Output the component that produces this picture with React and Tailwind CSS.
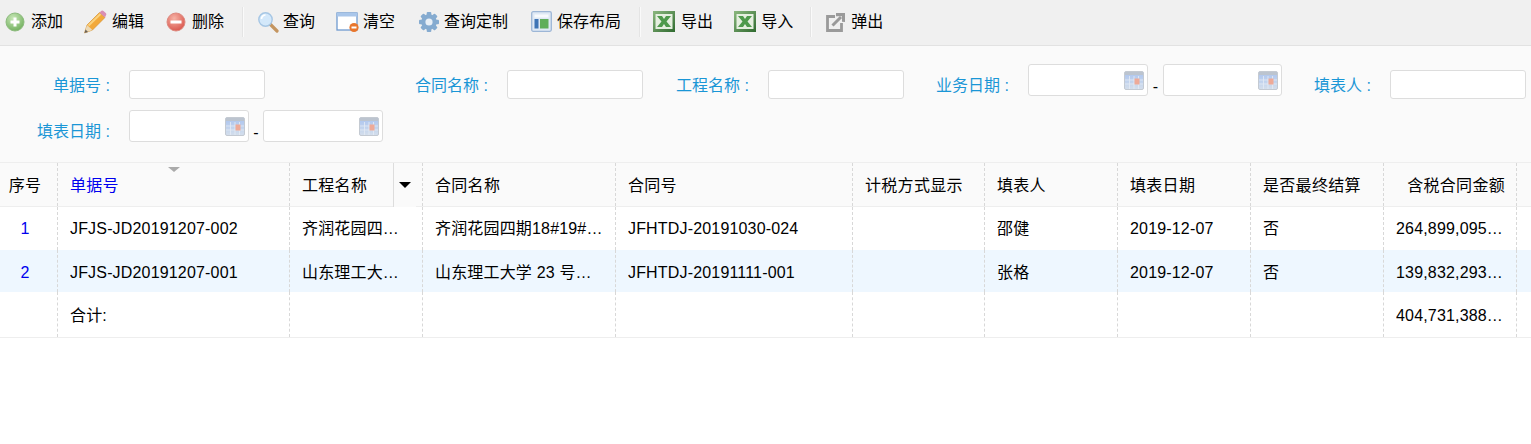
import React from "react";

const Add = () => (
  <svg width="20" height="20" viewBox="0 0 20 20" className="shrink-0"><defs><radialGradient id="g1" cx="40%" cy="30%" r="75%"><stop offset="0" stopColor="#c9e8b8"/><stop offset="1" stopColor="#6fae5c"/></radialGradient></defs><circle cx="10" cy="10" r="9" fill="url(#g1)" stroke="#8dbb7e"/><path d="M10 5.5v9M5.5 10h9" stroke="#fff" strokeWidth="3"/></svg>
);
const Pencil = () => (
  <svg width="24" height="24" viewBox="0 0 24 24" className="shrink-0"><path d="M1.5 23l2.5-8L16.5 2.5l5.5 5L9.5 20z" fill="#f2a93b" stroke="#d08a2a" strokeWidth=".6"/><path d="M5.5 15.5L17.5 4" stroke="#fbd27d" strokeWidth="2"/><path d="M16.5 2.5l2-1.8q1-.6 2 .2l2.5 2.3q.8 1 0 2L22 7.5z" fill="#d98fb4"/><path d="M1.5 23l2.5-8 5.5 5z" fill="#ecd9b5"/><path d="M1.5 23l1-3.4 2.6 2.3z" fill="#6b6257"/></svg>
);
const Del = () => (
  <svg width="20" height="20" viewBox="0 0 20 20" className="shrink-0"><defs><radialGradient id="g2" cx="40%" cy="30%" r="75%"><stop offset="0" stopColor="#f6b3a6"/><stop offset="1" stopColor="#d9534a"/></radialGradient></defs><circle cx="10" cy="10" r="9" fill="url(#g2)" stroke="#dd8a80"/><rect x="4.5" y="8.5" width="11" height="3" fill="#fff"/></svg>
);
const Search = () => (
  <svg width="22" height="22" viewBox="0 0 22 22" className="shrink-0"><path d="M13 13l7 7" stroke="#c49560" strokeWidth="3.2" strokeLinecap="round"/><circle cx="8.5" cy="8.5" r="6.7" fill="#d3e8fa" stroke="#a6c6e4" strokeWidth="1.4"/><path d="M4.5 8a4 4 0 0 1 4-4" stroke="#fff" strokeWidth="1.6" fill="none"/></svg>
);
const Clear = () => (
  <svg width="24" height="22" viewBox="0 0 24 22" className="shrink-0"><rect x="1" y="2" width="20" height="17" fill="#fff" stroke="#6f9ad0" strokeWidth="1.3"/><rect x="1" y="2" width="20" height="3.5" fill="#a9c6ea"/><circle cx="18" cy="16.5" r="4.6" fill="#e8762d"/><rect x="15.5" y="15.5" width="5" height="2" fill="#fff"/></svg>
);
const Gear = () => (
  <svg width="22" height="22" viewBox="0 0 22 22" className="shrink-0"><g fill="#85abd0"><circle cx="11" cy="11" r="7.8"/>{[0,45,90,135,180,225,270,315].map(a=><rect key={a} x="8.7" y="1" width="4.6" height="5" rx="1" transform={`rotate(${a} 11 11)`}/>)}</g><circle cx="11" cy="11" r="3.6" fill="#e8eff6"/></svg>
);
const Layout = () => (
  <svg width="21" height="21" viewBox="0 0 21 21" className="shrink-0"><rect x=".7" y=".7" width="19.6" height="19.6" rx="1.5" fill="#dfe9f5" stroke="#9db6d6" strokeWidth="1.3"/><rect x="3.5" y="3.5" width="14" height="3" fill="#f7fafd"/><rect x="3.5" y="8" width="4" height="9.5" fill="#3f74b5"/><rect x="9" y="8" width="8.5" height="9.5" fill="#5fae5a"/></svg>
);
const Excel = () => (
  <svg width="22" height="21" viewBox="0 0 22 21" className="shrink-0"><defs><linearGradient id="g3" x1="0" y1="0" x2="1" y2="1"><stop offset="0" stopColor="#8cb87f"/><stop offset="1" stopColor="#2f6a2f"/></linearGradient></defs><rect x="0" y="0" width="22" height="21" fill="url(#g3)"/><rect x="2.5" y="3" width="17" height="15" fill="#e6efe0"/><path d="M4 5h5l2 3 2-3h5l-4.5 5.5L18 16h-5l-2-3-2 3H4l4.5-5.5z" fill="#4f9a4c"/></svg>
);
const Popout = () => (
  <svg width="20" height="20" viewBox="0 0 20 20" className="shrink-0" fill="none"><path d="M9 4.5H1.5v14h14V11" stroke="#9a9a9a" strokeWidth="2.8"/><path d="M6.5 13.5L15 5" stroke="#9a9a9a" strokeWidth="3"/><path d="M10 1h9v9l-3-.2V4.2H10z" fill="#9a9a9a"/></svg>
);
const Cal = () => (
  <svg width="20" height="19" viewBox="0 0 20 19" className="absolute right-[3px] top-[6px]"><defs><linearGradient id="g4" x1="0" y1="0" x2="0" y2="1"><stop offset="0" stopColor="#a9c3ef"/><stop offset="1" stopColor="#d5dfec"/></linearGradient></defs><rect x=".5" y=".5" width="19" height="18" rx="1.5" fill="url(#g4)" stroke="#c4cad2"/><rect x="1" y="1" width="18" height="3" fill="#bcc4cf"/><path d="M5.5 5v13M10 5v13M14.5 5v13M1 9h18M1 13h18" stroke="#e4ebf4" strokeWidth=".8"/><rect x="10.5" y="7.5" width="5" height="6" fill="#eeaa98"/></svg>
);

const Tool = ({ icon, label, gap = "gap-[6px]", className = "" }) => (
  <div className={`flex items-center ${gap} ${className}`}>
    {icon}
    <span>{label}</span>
  </div>
);
const Sep = ({ className = "" }) => <div className={`h-[30px] w-[2px] bg-[#e4e4e4] border-r border-[#fafafa] ${className}`} />;

const Label = ({ children, className = "" }) => (
  <label className={`text-[#1a96d6] text-right shrink-0 mt-[11px] leading-[22px] ${className}`}>{children}</label>
);
const Input = ({ className = "" }) => (
  <div className={`w-[136px] h-[29px] mt-[6px] ml-[19px] bg-white border border-[#dddddd] rounded-[3px] shrink-0 ${className}`} />
);
const DateBox = ({ className = "" }) => (
  <div className={`relative h-[32px] bg-white border border-[#dddddd] rounded-[3px] shrink-0 ${className}`}><Cal /></div>
);
const Dash = ({ className = "" }) => <span className={`text-center mt-[12px] leading-[22px] ${className}`}>-</span>;

const cols = "grid grid-cols-[58px_232px_133px_193px_237px_132px_133px_133px_133px_133px_15px]";
const Cell = ({ children, className = "" }) => (
  <div className={`border-r border-dashed border-[#d8d8d8] px-3 flex items-center min-w-0 ${className}`}>
    <span className="block truncate w-full">{children}</span>
  </div>
);

const rows = [
  ["1", "JFJS-JD20191207-002", "齐润花园四期18#19#楼", "齐润花园四期18#19#楼工程合同", "JFHTDJ-20191030-024", "", "邵健", "2019-12-07", "否", "264,899,095.00000"],
  ["2", "JFJS-JD20191207-001", "山东理工大学 23 号楼", "山东理工大学 23 号楼工程合同", "JFHTDJ-20191111-001", "", "张格", "2019-12-07", "否", "139,832,293.00000"],
];

const Row = ({ r, className = "" }) => (
  <div className={`${cols} tracking-[0.17px] ${className}`}>
    <Cell className="!pl-0 !pr-[7px] text-center text-[#0000ee]">{r[0]}</Cell>
    {r.slice(1).map((t, i) => (
      <Cell key={i}>{t}</Cell>
    ))}
    <div />
  </div>
);

export default function App() {
  return (
    <div className="w-[1531px] h-[444px] overflow-hidden bg-white text-[16px] text-black font-['Liberation_Sans','Noto_Sans_CJK_SC',sans-serif]">
      <div className="h-[46px] bg-[#f0f0f0] border-b border-[#e2e2e2] flex items-center pl-[5px] pb-[2px]">
        <Tool icon={<Add />} label="添加" />
        <Tool icon={<Pencil />} label="编辑" gap="gap-[5px]" className="ml-[20px]" />
        <Tool icon={<Del />} label="删除" className="ml-[22px]" />
        <Sep className="ml-[18px]" />
        <Tool icon={<Search />} label="查询" gap="gap-[4px]" className="ml-[13px]" />
        <Tool icon={<Clear />} label="清空" gap="gap-[3px]" className="ml-[21px]" />
        <Tool icon={<Gear />} label="查询定制" gap="gap-[4px]" className="ml-[23px]" />
        <Tool icon={<Layout />} label="保存布局" gap="gap-[5px]" className="ml-[23px]" />
        <Sep className="ml-[18px]" />
        <Tool icon={<Excel />} label="导出" className="ml-[12px]" />
        <Tool icon={<Excel />} label="导入" gap="gap-[5px]" className="ml-[21px]" />
        <Sep className="ml-[17px]" />
        <Tool icon={<Popout />} label="弹出" gap="gap-[5px]" className="ml-[14px]" />
      </div>

      <div className="h-[117px] bg-[#fafafa] border-b border-[#eeeeee] pt-[18px]">
        <div className="flex items-start h-[32px] w-full">
          <Label className="w-[110px]">单据号 :</Label>
          <Input />
          <Label className="w-[223px]">合同名称 :</Label>
          <Input />
          <Label className="w-[106px]">工程名称 :</Label>
          <Input />
          <Label className="w-[105px]">业务日期 :</Label>
          <DateBox className="w-[120px] ml-[19px]" />
          <Dash className="w-[15px]" />
          <DateBox className="w-[119px]" />
          <Label className="w-[89px]">填表人 :</Label>
          <Input />
        </div>
        <div className="flex items-start h-[32px] mt-[14px]">
          <Label className="w-[110px]">填表日期 :</Label>
          <DateBox className="w-[120px] ml-[19px]" />
          <Dash className="w-[14px]" />
          <DateBox className="w-[120px]" />
        </div>
      </div>

      <div className="relative">
        <div className={`${cols} h-[44px] bg-[#fafafa] border-b border-[#eeeeee] tracking-[0.3px] [&>div]:pt-[2px]`}>
          <Cell className="!pl-0 !pr-[7px] text-center">序号</Cell>
          <Cell className="text-[#0000ee]">单据号</Cell>
          <Cell>工程名称</Cell>
          <Cell>合同名称</Cell>
          <Cell>合同号</Cell>
          <Cell>计税方式显示</Cell>
          <Cell>填表人</Cell>
          <Cell>填表日期</Cell>
          <Cell>是否最终结算</Cell>
          <Cell className="text-right !pr-[11px]">含税合同金额</Cell>
          <div />
        </div>
        <div className="absolute left-[168px] top-[4px] w-0 h-0 border-x-[6px] border-x-transparent border-t-[5px] border-t-[#aaaaaa]" />
        <div className="absolute left-[393px] top-0 w-[23px] h-[44px] bg-[#fafafa] border-l border-[#dddddd] flex items-center justify-center">
          <div className="w-0 h-0 border-x-[6px] border-x-transparent border-t-[6px] border-t-black" />
        </div>
        <Row r={rows[0]} className="h-[43px]" />
        <Row r={rows[1]} className="h-[42px] bg-[#eef7ff] [&>div]:pt-[3px]" />
        <div className={`${cols} h-[46px] border-b border-[#eeeeee] tracking-[0.17px] [&>div]:pt-[2px]`}>
          <Cell />
          <Cell>合计:</Cell>
          <Cell /><Cell /><Cell /><Cell /><Cell /><Cell /><Cell />
          <Cell>404,731,388.00000</Cell>
          <div />
        </div>
      </div>
    </div>
  );
}
